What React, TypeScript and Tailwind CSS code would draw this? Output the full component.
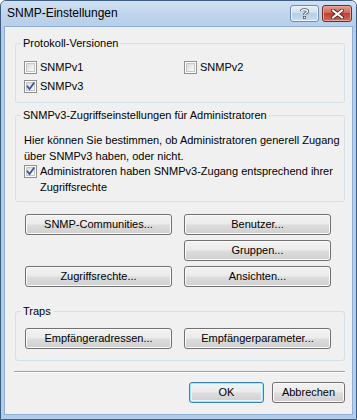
import React from 'react';

const btnBase =
  "flex items-center justify-center h-[21px] rounded-[3px] border text-[11px] leading-[13px] text-black bg-[linear-gradient(to_bottom,#f2f2f2_0%,#ebebeb_48%,#dddddd_52%,#cfcfcf_100%)]";

function Button({ children, className = '', primary = false }: { children: React.ReactNode; className?: string; primary?: boolean }) {
  return (
    <div
      className={`${btnBase} ${
        primary
          ? 'border-[#3c7fb1] shadow-[inset_0_0_0_1px_#a6e6fb,inset_0_0_0_2px_#e4f7fd]'
          : 'border-[#707070] shadow-[inset_0_0_0_1px_#fbfbfb]'
      } ${className}`}
    >
      {children}
    </div>
  );
}

function Checkbox({ checked = false }: { checked?: boolean }) {
  return (
    <div className="relative w-[13px] h-[13px] shrink-0 border border-[#8e8f8f] bg-white p-[1px]">
      <div className="w-full h-full border border-[#c2c5ca] bg-[linear-gradient(135deg,#d8dadd_0%,#eeeff0_60%,#fafafa_100%)]" />
      {checked && (
        <svg className="absolute left-[1px] top-[1px]" width="9" height="9" viewBox="0 0 9 9">
          <path d="M1.5 4.5 L3.5 7 L7.8 1.2" fill="none" stroke="#3a4f9c" strokeWidth="1.7" strokeLinecap="square" />
        </svg>
      )}
    </div>
  );
}

function GroupBox({ title, children, className = '' }: { title: string; children: React.ReactNode; className?: string }) {
  return (
    <fieldset className={`border border-[#d5dfe5] rounded-[3px] ${className}`}>
      <legend className="ml-[5px] px-[2px] text-[11px] leading-[13px]">{title}</legend>
      {children}
    </fieldset>
  );
}

export default function App() {
  return (
    <div className="w-[357px] h-[420px] bg-white font-['Liberation_Sans',Arial,sans-serif] text-black">
      <div className="flex flex-col w-full h-full rounded-t-[6px] border border-[#3d5d80] bg-[#b2cce9] overflow-hidden">
        {/* Title bar */}
        <div className="flex items-start h-[25px] shrink-0 bg-[linear-gradient(to_bottom,#d0e0f2_0%,#c0d5ed_50%,#b7cee9_100%)]">
          <div className="pl-[6px] pt-[5px] text-[12px] leading-[15px] flex-1">SNMP-Einstellungen</div>
          <div className="flex gap-[3px] pt-[4px] pr-[4px]">
            <div className="flex items-center justify-center w-[29px] h-[17px] rounded-[3px] border border-[#6e8db3] shadow-[inset_0_0_0_1px_#eef4fb] bg-[linear-gradient(to_bottom,#e6eff9_0%,#cfdff1_45%,#b7cde8_50%,#cadcf0_100%)]">
              <svg width="9" height="11" viewBox="0 0 9 11">
                <path d="M1.5 3.2 C1.5 1.2 7.5 1.2 7.5 3.2 C7.5 5 4.5 5 4.5 6.8" fill="none" stroke="#3f4f63" strokeWidth="3" />
                <path d="M1.5 3.2 C1.5 1.2 7.5 1.2 7.5 3.2 C7.5 5 4.5 5 4.5 6.8" fill="none" stroke="#ffffff" strokeWidth="1.4" />
                <rect x="3" y="8" width="3" height="3" fill="#3f4f63" />
                <rect x="3.7" y="8.7" width="1.6" height="1.6" fill="#ffffff" />
              </svg>
            </div>
            <div className="flex items-center justify-center w-[30px] h-[17px] rounded-[3px] border border-[#6f2b25] shadow-[inset_0_0_0_1px_#e8a79d] bg-[linear-gradient(to_bottom,#e39d90_0%,#d16a5b_45%,#bf4031_50%,#cc6a5c_100%)]">
              <svg width="13" height="10" viewBox="0 0 13 10">
                <path d="M2 1.5 L11 8.5 M11 1.5 L2 8.5" stroke="#5b2520" strokeWidth="4" strokeLinecap="square" />
                <path d="M2 1.5 L11 8.5 M11 1.5 L2 8.5" stroke="#ffffff" strokeWidth="2" strokeLinecap="square" />
              </svg>
            </div>
          </div>
        </div>

        {/* Frame + client */}
        <div className="flex-1 flex flex-col px-[3px] pb-[4px]">
          <div className="flex-1 flex flex-col bg-[#f0f0f0] border border-[#8fb0d4] pl-[10px] pr-[7px] pt-[10px] text-[11px]">
            <GroupBox title="Protokoll-Versionen">
              <div className="grid grid-cols-[160px_1fr] gap-y-[6px] pl-[8px] pt-[11px] pb-[9px] leading-[13px]">
                <div className="flex items-start gap-[3px]">
                  <Checkbox />
                  <span>SNMPv1</span>
                </div>
                <div className="flex items-start gap-[3px]">
                  <Checkbox />
                  <span>SNMPv2</span>
                </div>
                <div className="flex items-start gap-[3px]">
                  <Checkbox checked />
                  <span>SNMPv3</span>
                </div>
              </div>
            </GroupBox>

            <GroupBox title="SNMPv3-Zugriffseinstellungen für Administratoren" className="mt-[6px]">
              <div className="pl-[8px] pt-[10px] pb-[6px] leading-[16px]">
                <p>
                  Hier können Sie bestimmen, ob Administratoren generell Zugang
                  <br />
                  über SNMPv3 haben, oder nicht.
                </p>
                <div className="flex items-start gap-[3px] mt-[1px]">
                  <Checkbox checked />
                  <span className="-mt-[2px]">
                    Administratoren haben SNMPv3-Zugang entsprechend ihrer
                    <br />
                    Zugriffsrechte
                  </span>
                </div>
              </div>
            </GroupBox>

            <div className="grid grid-cols-[147px_147px] gap-x-[12px] gap-y-[5px] ml-[10px] mt-[12px]">
              <Button>SNMP-Communities...</Button>
              <Button>Benutzer...</Button>
              <Button className="col-start-2">Gruppen...</Button>
              <Button>Zugriffsrechte...</Button>
              <Button>Ansichten...</Button>
            </div>

            <GroupBox title="Traps" className="mt-[18px]">
              <div className="grid grid-cols-[147px_147px] gap-x-[12px] pl-[9px] pt-[10px] pb-[11px]">
                <Button>Empfängeradressen...</Button>
                <Button>Empfängerparameter...</Button>
              </div>
            </GroupBox>

            <div className="mt-[10px] -ml-px border-t border-b border-t-[#a0a0a0] border-b-white" />

            <div className="flex justify-end gap-[8px] mt-[9px]">
              <Button primary className="w-[75px]">OK</Button>
              <Button className="w-[73px]">Abbrechen</Button>
            </div>
          </div>
        </div>
      </div>
    </div>
  );
}
